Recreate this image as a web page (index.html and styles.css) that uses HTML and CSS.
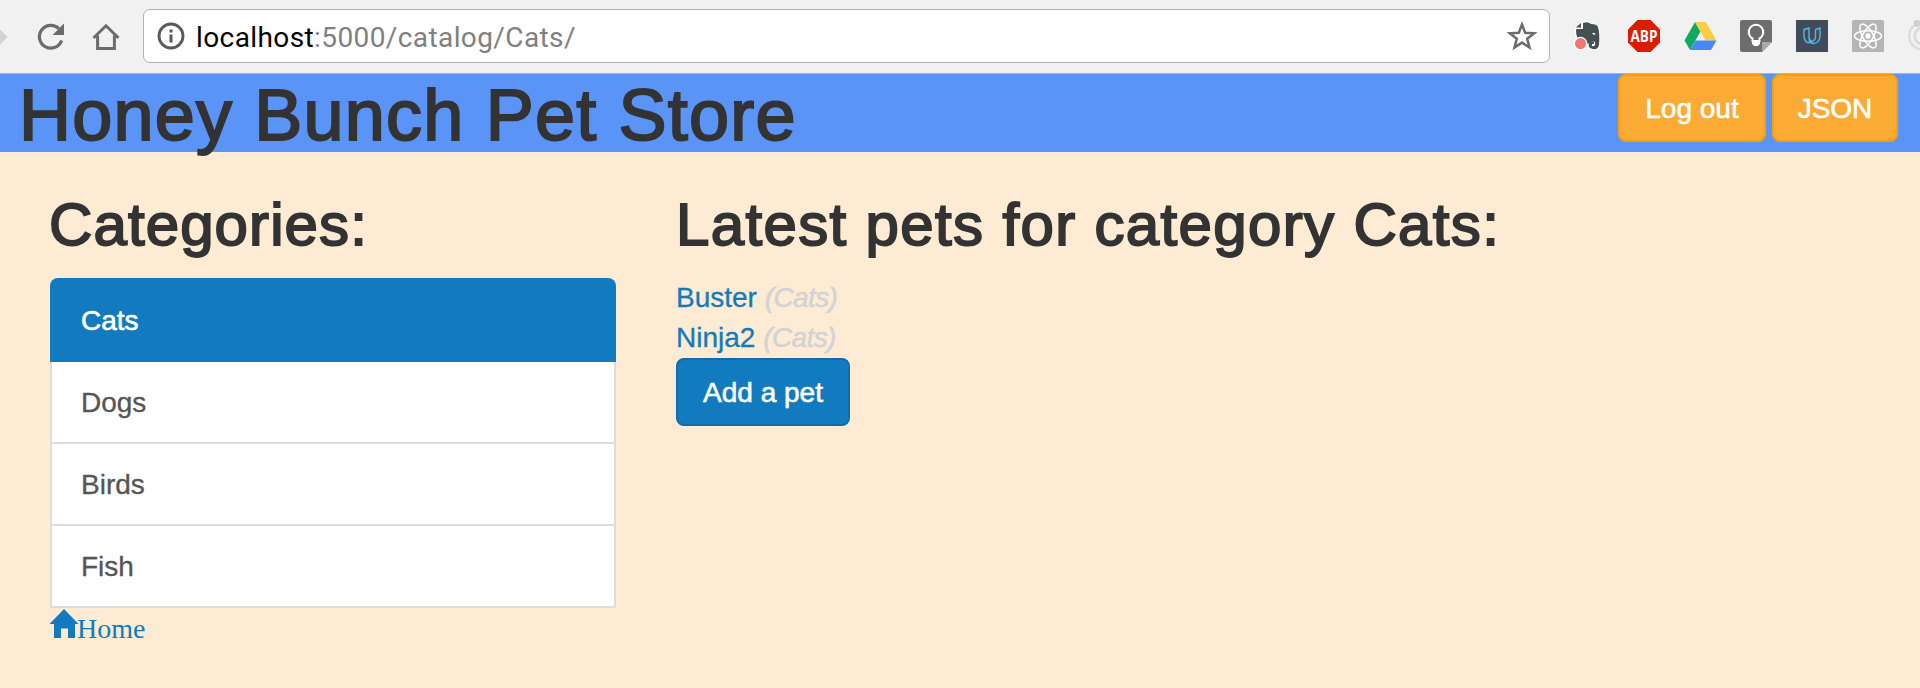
FILE: index.html
```html
<!DOCTYPE html>
<html lang="en">
<head>
<meta charset="utf-8">
<title>Honey Bunch Pet Store</title>
<link rel="stylesheet" href="styles.css">
</head>
<body>
<div class="toolbar">
  <svg class="forward" width="8" height="36" viewBox="0 0 8 36"><path d="M-8 18H4M-3 10l8 8-8 8" fill="none" stroke="#d2d2d2" stroke-width="3.6"/></svg>
  <svg class="reload" width="30" height="30" viewBox="0 0 30 30"><path d="M25.600 18.500A11.400 11.400 0 1 1 22.800 6.600" fill="none" stroke="#6b6b6b" stroke-width="3.2"/><path d="M28 1.500v11.600H16.600z" fill="#6b6b6b"/></svg>
  <svg class="house" width="28" height="28" viewBox="0 0 28 28"><path d="M1.500 15L14 2.800 26.500 15M5.600 12.500V25.500H22.400V12.500" fill="none" stroke="#6b6b6b" stroke-width="3"/></svg>
  <div class="address">
    <svg class="info" width="28" height="28" viewBox="0 0 28 28"><circle cx="14" cy="14" r="12" fill="none" stroke="#5a5a5a" stroke-width="2.9"/><path d="M12.500 7.500h3v3h-3zM12.500 12.500h3v8h-3z" fill="#5a5a5a"/></svg>
    <span class="url"><span class="host">localhost</span>:5000/catalog/Cats/</span>
    <svg class="star" width="30" height="30" viewBox="0 0 30 30"><path d="M15 3.500l3.200 8.200 9 .5-7 5.600 2.300 8.700-7.500-4.900-7.500 4.900 2.300-8.700-7-5.600 9-.5z" fill="none" stroke="#6b6b6b" stroke-width="2.500"/></svg>
  </div>
  <div class="extensions">
    <svg width="32" height="32" viewBox="0 0 32 32"><g transform="translate(1 0)"><path d="M10 3q5-2 8 1 6 0 7 3 2 7 1 18-1 5-6 4-6-1-4-6 2-3 5-1v2q-3-1-2 2 4 1 3-4-4-2-5 1-7 2-10-3-4-2-4-10l.500-1H10z" fill="#455052" stroke="#fff" stroke-width="2" paint-order="stroke"/><path d="M3 7.500l5-4.500v4.500z" fill="#455052"/><path d="M19 14q2.500-3 3.500 1z" fill="#fff"/><circle cx="7.500" cy="23.600" r="6.200" fill="#f1776d" stroke="#fff" stroke-width="1.200"/></g></svg>
    <svg class="blocker" width="32" height="32" viewBox="0 0 32 32"><path d="M9.400 0h13.200L32 9.400v13.200L22.600 32H9.400L0 22.600V9.400z" fill="#dc1c00"/><text class="abp" x="16" y="21.500" text-anchor="middle" textLength="27" lengthAdjust="spacingAndGlyphs">ABP</text></svg>
    <svg width="32" height="32" viewBox="0 0 32 32"><g transform="translate(.5 0)"><path d="M10.500 2L0 20.500 5.500 30 16 11.500z" fill="#11a861"/><path d="M10.500 2h11l10.500 18.500H21z" fill="#fdcd48"/><path d="M5.500 30L11 20.500h21L26.500 30z" fill="#4688f4"/></g></svg>
    <svg width="32" height="32" viewBox="0 0 32 32"><path d="M2 0h28a2 2 0 0 1 2 2v20L22 32H2a2 2 0 0 1-2-2V2a2 2 0 0 1 2-2z" fill="#6d6d6d"/><path d="M22 32V22h10z" fill="#a9a9a9"/><path d="M12.500 21v-2.500a7.300 7.300 0 1 1 7 0V21z" fill="none" stroke="#fff" stroke-width="2"/><path d="M12 22h8v2.500h-1.500V26h-5v-1.500H12z" fill="#fff"/></svg>
    <svg width="32" height="32" viewBox="0 0 32 32"><path d="M0 0h32v32H0z" fill="#414c5a"/><path d="M8 9.500l5-1.500v9q0 3.500 3.500 4.500Q10 25.500 8 17zM19.500 9.500l4.500-1.500v9q-1 6-6.500 6.500-4.500-.5-4.500-5M19.500 9.500V17q-.2 3-3 4.500" fill="none" stroke="#58b4e0" stroke-width="1.400"/></svg>
    <svg width="32" height="32" viewBox="0 0 32 32"><rect width="32" height="32" rx="1.500" fill="#b5b5b5"/><g fill="none" stroke="#fff" stroke-width="1.500"><ellipse cx="16" cy="16" rx="13.500" ry="5.200"/><ellipse cx="16" cy="16" rx="13.500" ry="5.200" transform="rotate(60 16 16)"/><ellipse cx="16" cy="16" rx="13.500" ry="5.200" transform="rotate(120 16 16)"/></g><circle cx="16" cy="16" r="2.700" fill="#fff"/></svg>
    <svg width="12" height="32" viewBox="0 0 12 32"><circle cx="15" cy="16" r="13.800" fill="none" stroke="#d9d9d9" stroke-width="2.200"/><circle cx="15" cy="16" r="8.300" fill="none" stroke="#d9d9d9" stroke-width="2.600"/><circle cx="9" cy="3.500" r="3.400" fill="#cfcfcf"/></svg>
  </div>
</div>
<header class="banner">
  <h1>Honey Bunch Pet Store</h1>
  <nav class="actions"><a class="btn btn-warning logout">Log out</a><a class="btn btn-warning json">JSON</a></nav>
</header>
<main class="content">
  <section class="categories">
    <h2>Categories:</h2>
    <div class="list-group">
      <a class="item active">Cats</a>
      <a class="item">Dogs</a>
      <a class="item">Birds</a>
      <a class="item">Fish</a>
    </div>
    <a class="home"><svg width="27" height="29" viewBox="0 0 27 29"><path d="M14 0l14.500 15H25v14h-7v-9.500h-7V29H4V15H-.5z" fill="#127abe"/></svg><span>Home</span></a>
  </section>
  <section class="latest">
    <h2>Latest pets for category Cats:</h2>
    <div class="pets">
      <div class="pet"><a>Buster</a> <i>(Cats)</i></div>
      <div class="pet"><a>Ninja2</a> <i>(Cats)</i></div>
    </div>
    <a class="btn btn-primary">Add a pet</a>
  </section>
</main>
</body>
</html>
```

FILE: styles.css
```css
* { box-sizing: border-box; }
body {
  margin: 0;
  height: 688px;
  overflow: hidden;
  background: #fdebd3;
  color: #333;
  font: 28px/40px "Liberation Sans", Arial, sans-serif;
}
svg { display: block; flex: none; overflow: visible; }
.toolbar {
  display: flex;
  align-items: center;
  height: 74px;
  background: #f1f1f1;
  border-bottom: 1px solid #b4b4b4;
  overflow: hidden;
}
.reload { margin-left: 28px; }
.house { margin: 0 23px 0 26px; }
.address {
  display: flex;
  align-items: center;
  width: 1408px;
  height: 54px;
  margin-top: -1px;
  padding: 0 12px 0 13px;
  background: #fff;
  border: 1px solid #b2b2b2;
  border-radius: 7px;
}
.url {
  flex: 1;
  margin-left: 11px;
  padding-top: 3px;
  color: #808080;
  font: 28px/40px Roboto, sans-serif;
  letter-spacing: .4px;
}
.host { color: #000; }
.extensions { display: flex; gap: 24px; margin-left: 22px; margin-top: -1px; }
.abp { font: bold 16px "Open Sans", sans-serif; fill: #fff; }
.banner {
  display: flex;
  justify-content: space-between;
  height: 78px;
  padding: 0 22px 0 19px;
  background: #5a94f6;
}
h1, h2 { margin: 0; font-weight: 400; white-space: nowrap; }
h1 {
  font-size: 72px;
  line-height: 82px;
  letter-spacing: 1.2px;
  -webkit-text-stroke: 2px #333;
}
h2 {
  font-size: 60px;
  line-height: 66px;
  letter-spacing: 1.1px;
  -webkit-text-stroke: 1.9px #333;
}
.latest h2 { letter-spacing: 1.35px; }
.actions { display: flex; gap: 6px; }
.btn {
  display: block;
  height: 68px;
  border: 2px solid;
  border-radius: 8px;
  color: #fff;
  line-height: 65px;
  text-align: center;
  -webkit-text-stroke: .6px #fff;
}
.btn-warning { background: #fbab34; border-color: #fc9f06; }
.logout { width: 148px; }
.json { width: 126px; }
.btn-primary { width: 174px; background: #127abe; border-color: #116cab; }
.content { display: flex; padding: 40px 50px 0; }
.categories { width: 566px; margin-right: 60px; }
.categories h2 { margin-left: -1px; }
.list-group {
  margin-top: 20px;
  border: 2px solid #ddd;
  border-top: 0;
  border-radius: 8px 8px 0 0;
  background: #fff;
}
.item {
  display: block;
  height: 82px;
  padding: 0 29px;
  border-top: 2px solid #ddd;
  color: #555;
  line-height: 81px;
  -webkit-text-stroke: .3px #555;
}
.item.active {
  height: 84px;
  margin: 0 -2px;
  padding: 0 31px;
  border: 0;
  border-radius: 8px 8px 0 0;
  background: #127abe;
  color: #fff;
  line-height: 85px;
  -webkit-text-stroke: .6px #fff;
}
.item.active + .item { height: 80px; border-top: 0; }
.home {
  display: flex;
  margin-top: 1px;
  color: #127abe;
  font: 28px/40px "Liberation Serif", "Times New Roman", serif;
}
.pets { margin-top: 20px; margin-bottom: -2px; height: 80px; }
.latest .btn { margin-top: 2px; }
.pet { color: #d3d3d3; }
.pet a { color: #127abe; -webkit-text-stroke: .3px #127abe; }
.pet i { letter-spacing: -.6px; -webkit-text-stroke: .5px #d3d3d3; }
```
